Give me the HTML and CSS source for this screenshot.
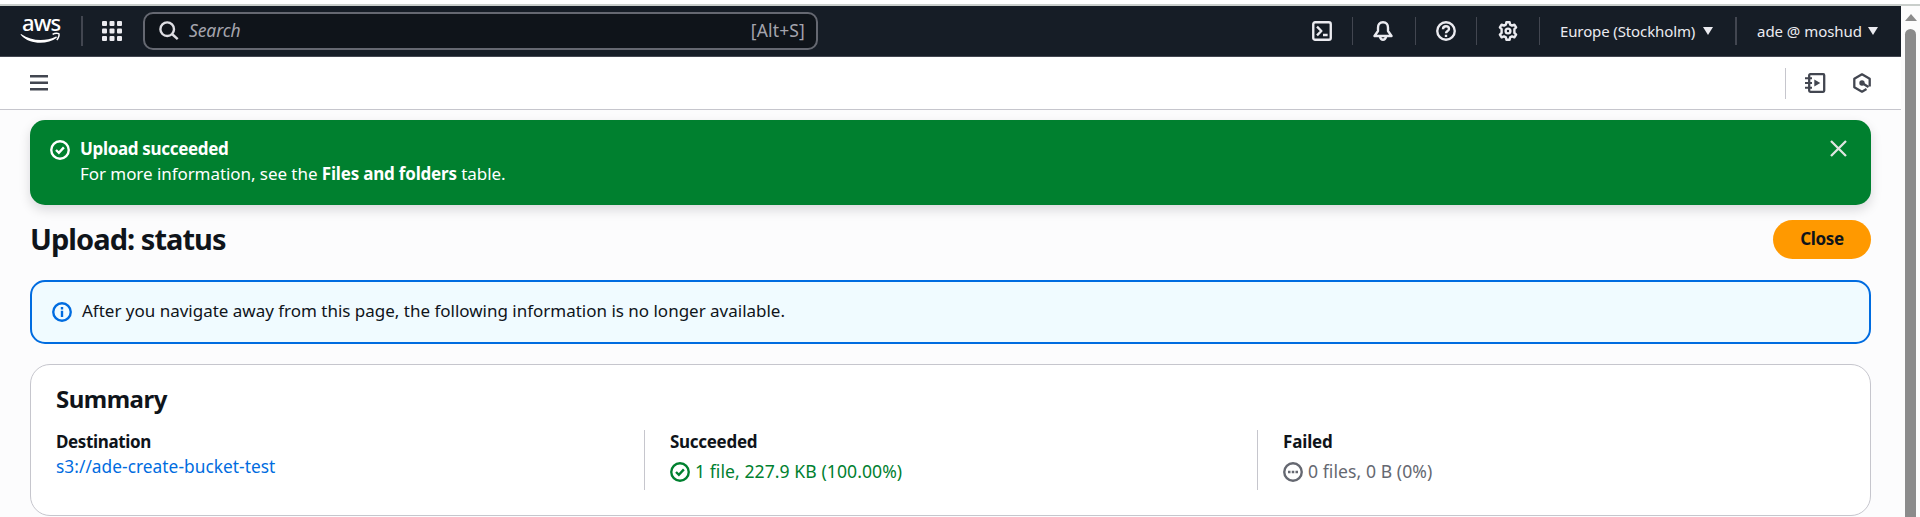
FILE: index.html
```html
<!DOCTYPE html>
<html lang="en">
<head>
<meta charset="utf-8">
<title>Upload: status</title>
<link rel="stylesheet" href="styles.css">
</head>
<body>
<div class="browser-edge"></div>
<div class="viewport">
  <div class="page">
    <header class="topnav">
      <div class="logo">
        <span class="logo-text">aws</span>
        <svg width="42" height="12" viewBox="0 0 42 12">
          <path d="M1.400 2.200C11 9 25 9.800 35.600 4.700c1-.5 1.700.5.900 1.200C28 12.500 10 13.300.9 3c-.5-.6 0-1.100.5-.8z" fill="#fff"/>
          <path d="M32.600 2.400c2-1.300 4.600-1.400 6.200-.8.7 1.200-.2 4.400-2 6.300" fill="none" stroke="#fff" stroke-width="1.500"/>
        </svg>
      </div>
      <span class="rule rule-logo"></span>
      <svg class="apps" width="20" height="20" viewBox="0 0 20 20" fill="#ebebf0">
        <rect width="5" height="5" rx="1"/><rect x="7.500" width="5" height="5" rx="1"/><rect x="15" width="5" height="5" rx="1"/>
        <rect y="7.500" width="5" height="5" rx="1"/><rect x="7.500" y="7.500" width="5" height="5" rx="1"/><rect x="15" y="7.500" width="5" height="5" rx="1"/>
        <rect y="15" width="5" height="5" rx="1"/><rect x="7.500" y="15" width="5" height="5" rx="1"/><rect x="15" y="15" width="5" height="5" rx="1"/>
      </svg>
      <div class="search">
        <svg width="20" height="20" viewBox="0 0 20 20" fill="none" stroke="#dedee3" stroke-width="2.400"><circle cx="8.200" cy="8.200" r="6.800"/><path d="M13 13l5.700 5.200"/></svg>
        <span class="search-label">Search</span>
        <span class="search-key">[Alt+S]</span>
      </div>
      <nav class="tools">
        <span class="tool tool-shell"><svg class="icon" viewBox="0 0 16 16"><rect x="1" y="1" width="14" height="14" rx="1.500"/><path d="M4 4.500l3.500 3.500L4 11.500M8.800 11.200H12.500"/></svg></span>
        <span class="tool tool-bell"><svg class="icon" viewBox="0 0 16 16"><path d="M8 1C5.300 1 4 3 4 5.300V8L1.200 12H14.800L12 8V5.300C12 3 10.700 1 8 1zM5.500 12.500c.5 1.700 1.300 2.500 2.500 2.500s2-.8 2.500-2.500"/></svg></span>
        <span class="tool tool-help"><svg class="icon" viewBox="0 0 16 16"><circle cx="8" cy="8" r="7"/><path d="M5.600 6.500C5.600 5 6.600 4.200 8 4.200s2.400.8 2.400 2.100C10.400 8 8 7.900 8 9.700M8 10.900v1.800"/></svg></span>
        <span class="tool tool-gear"><svg class="icon" viewBox="0 0 16 16"><path d="M6.700 1h2.600l.4 1.900 1.500.8 1.900-.8 1.400 2.200-1.400 1.400v3l1.400 1.400-1.400 2.200-1.900-.8-1.500.8L9.300 15H6.700l-.4-1.900-1.500-.8-1.900.8-1.400-2.200 1.400-1.400v-3L1.500 5.100l1.400-2.200 1.900.8 1.500-.8z"/><circle cx="8" cy="8" r="1.900"/></svg></span>
        <span class="menu menu-region"><span class="region">Europe (Stockholm)</span><i class="caret"></i></span>
        <span class="menu menu-user"><span class="user">ade @ moshud</span><i class="caret"></i></span>
      </nav>
    </header>
    <div class="toolbar">
      <svg class="burger" width="18" height="16" viewBox="0 0 18 16" fill="#424650"><path d="M0 0h18v2.500H0zM0 6.500h18V9H0zM0 13h18v2.500H0z"/></svg>
      <div class="toolbar-right">
        <svg width="21" height="20" viewBox="0 0 21 20" fill="none" stroke="#424650" stroke-width="2.300"><rect x="4.200" y="1.200" width="15" height="17.600" rx="1"/><path d="M0 5.300h7M0 10h7M0 14.700h7" stroke-width="1.900"/><path d="M9.300 6.500v7l6-3.500z" fill="#424650" stroke="none"/></svg>
        <svg width="20" height="20" viewBox="0 0 20 20" fill="none" stroke="#424650" stroke-width="2.300"><path d="M17.700 13.500V5.700L10 1.300 2.300 5.700v8.600L10 18.700l4.500-2.600" stroke-linejoin="round"/><path d="M10 10l6.500 4"/><circle cx="10" cy="10" r="2.700" fill="#424650" stroke="none"/></svg>
      </div>
    </div>
    <main class="content">
      <section class="flash">
        <svg class="status" viewBox="0 0 16 16"><circle cx="8" cy="8" r="7"/><path d="M4.800 8l2.300 2.300 4-4.400"/></svg>
        <div class="flash-body">
          <strong class="flash-title">Upload succeeded</strong>
          <p class="flash-text">For more information, see the <strong>Files and folders</strong> table.</p>
        </div>
        <svg class="dismiss" width="17" height="17" viewBox="0 0 17 17" fill="none" stroke="#dfe5e1" stroke-width="2.300"><path d="M1 1l15 15M16 1L1 16"/></svg>
      </section>
      <div class="heading">
        <h1>Upload: status</h1>
        <button class="close">Close</button>
      </div>
      <section class="notice">
        <svg class="status blue" viewBox="0 0 16 16"><circle cx="8" cy="8" r="7"/><path d="M8 7v5M8 4v2"/></svg>
        <span class="notice-text">After you navigate away from this page, the following information is no longer available.</span>
      </section>
      <section class="card">
        <h2>Summary</h2>
        <div class="columns">
          <div class="col"><div class="label dest">Destination</div><a class="link">s3://ade-create-bucket-test</a></div>
          <div class="col"><div class="label succ">Succeeded</div><div class="value green"><svg class="status" viewBox="0 0 16 16"><circle cx="8" cy="8" r="7"/><path d="M4.800 8l2.300 2.300 4-4.400"/></svg><span class="ok-text">1 file, 227.9 KB (100.00%)</span></div></div>
          <div class="col"><div class="label fail">Failed</div><div class="value grey"><svg class="status" viewBox="0 0 16 16"><circle cx="8" cy="8" r="7"/><path d="M4 8h2M7 8h2M10 8h2"/></svg><span class="fail-text">0 files, 0 B (0%)</span></div></div>
        </div>
      </section>
    </main>
  </div>
  <div class="scrollbar"><i class="arrow"></i><i class="thumb"></i></div>
</div>
</body>
</html>
```
FILE: styles.css
```css
* { box-sizing: border-box; }
body { margin: 0; height: 517px; overflow: hidden; background: #fcfcfd; color: #0f141a; font-family: "Noto Sans", sans-serif; font-size: 17px; }
h1, h2, p { margin: 0; }
svg { display: block; flex: none; }
.browser-edge { height: 6px; background: #fff; border-bottom: 2px solid #c9cecb; }
.viewport { display: flex; height: 511px; }
.page { width: 1901px; }

.topnav { display: flex; align-items: center; height: 51px; background: #161d26; border-bottom: 1px solid #424650; padding-left: 20px; }
.logo { display: flex; flex-direction: column; align-self: flex-start; width: 42px; margin-top: 1px; }
.logo-text { height: 30px; padding-left: 2px; color: #fff; font-size: 22px; font-weight: 500; line-height: 30px; letter-spacing: -.9px; }
.logo svg { margin-top: -5px; }
.rule { width: 2px; height: 30px; background: #424650; }
.rule-logo { margin-left: 19px; }
.apps { margin-left: 19px; }
.search { display: flex; align-items: center; width: 675px; height: 38px; margin-left: 21px; padding: 0 11px 0 14px; border: 2px solid #656871; border-radius: 10px; background: #0f141a; }
.search-label { margin-left: 10px; padding-bottom: 2px; font-size: 17.5px; font-style: italic; color: #a4a4ad; letter-spacing: -.1px; }
.search-key { margin-left: auto; padding-bottom: 2px; font-size: 17.5px; color: #a4a4ad; letter-spacing: .15px; }
.tools { display: flex; align-items: center; margin-left: auto; height: 28px; color: #ebebf0; font-size: 15px; }
.tool { display: flex; align-items: center; height: 28px; border-right: 1px solid #424650; }
.icon { width: 20px; height: 20px; fill: none; stroke: #ebebf0; stroke-width: 1.9; stroke-linejoin: round; }
.tool-shell { padding-right: 20px; }
.tool-bell { padding: 0 22px 0 20px; }
.tool-help { padding: 0 20px; }
.tool-gear { padding: 0 21px; }
.menu { display: flex; align-items: center; justify-content: space-between; height: 28px; }
.menu-region { width: 195px; padding: 0 22px 0 20px; }
.menu-user { width: 166px; padding: 0 23px 0 20px; border-left: 2px solid #424650; }
.caret { border: 5px solid transparent; border-top: 8px solid #ebebf0; border-bottom: 0; }
.region { letter-spacing: -.12px; }
.user { letter-spacing: -.04px; }

.toolbar { display: flex; align-items: center; justify-content: space-between; height: 53px; padding: 0 29px 0 30px; background: #fff; border-bottom: 1px solid #c6c6cd; }
.toolbar-right { display: flex; align-items: center; gap: 26px; height: 31px; padding-left: 19px; border-left: 1px solid #c6c6cd; }

.content { padding: 10px 30px 0; }
.flash { display: flex; align-items: flex-start; height: 85px; padding: 20px 24px 0 20px; border-radius: 15px; background: #00802f; color: #fff; box-shadow: 0 5px 12px rgba(0, 7, 22, .14); }
.status { width: 20px; height: 20px; fill: none; stroke: currentColor; stroke-width: 1.9; }
.blue { color: #006ce0; }
.flash-body { margin-left: 10px; line-height: 25px; margin-top: -4px; }
.flash-title { display: block; letter-spacing: -.33px; font-weight: 700; }
.flash-text { letter-spacing: -.06px; }
.flash-text strong { letter-spacing: -.19px; }
.dismiss { margin-left: auto; }
.heading { display: flex; align-items: center; justify-content: space-between; height: 39px; margin-top: 15px; }
h1 { padding-bottom: 2px; font-size: 29px; font-weight: 700; letter-spacing: -.95px; line-height: 37px; }
.close { width: 98px; height: 39px; padding: 0 0 2px; border: 0; border-radius: 20px; background: #ff9900; color: #0f141a; font: 700 17px "Noto Sans", sans-serif; letter-spacing: -.4px; }
.notice { display: flex; align-items: center; height: 64px; margin-top: 21px; padding-left: 20px; border: 2px solid #006ce0; border-radius: 15px; background: #f0fbff; }
.notice-text { margin-left: 10px; padding-bottom: 3px; letter-spacing: -.01px; }
.card { height: 152px; margin-top: 20px; padding: 17px 25px 0; border: 1px solid #c6c6cd; border-radius: 20px; background: #fff; }
h2 { font-size: 24px; font-weight: 700; letter-spacing: -.5px; line-height: 34px; }
.columns { display: grid; grid-template-columns: 588px 613px 1fr; height: 60px; margin-top: 14px; }
.col + .col { border-left: 1px solid #c6c6cd; padding-left: 25px; }
.label { margin-top: -1px; font-weight: 700; line-height: 25px; letter-spacing: -.37px; }
.succ { letter-spacing: -.3px; }
.fail { letter-spacing: -.15px; }
.link { display: block; color: #006ce0; font-size: 17.3px; line-height: 25px; letter-spacing: .04px; }
.value { display: flex; align-items: center; gap: 5px; height: 36px; }
.green { color: #00802f; }
.grey { color: #656871; }
.ok-text, .fail-text { padding-bottom: 3px; font-size: 17.6px; letter-spacing: .06px; }

.scrollbar { width: 19px; background: #fcfcfc; display: flex; flex-direction: column; align-items: center; padding-top: 8px; }
.arrow { border: 6.5px solid transparent; border-bottom: 7px solid #8b8b8b; border-top: 0; }
.thumb { width: 11px; flex: 1; margin-top: 8px; border-radius: 6px 6px 0 0; background: #8b8b8b; }
```
